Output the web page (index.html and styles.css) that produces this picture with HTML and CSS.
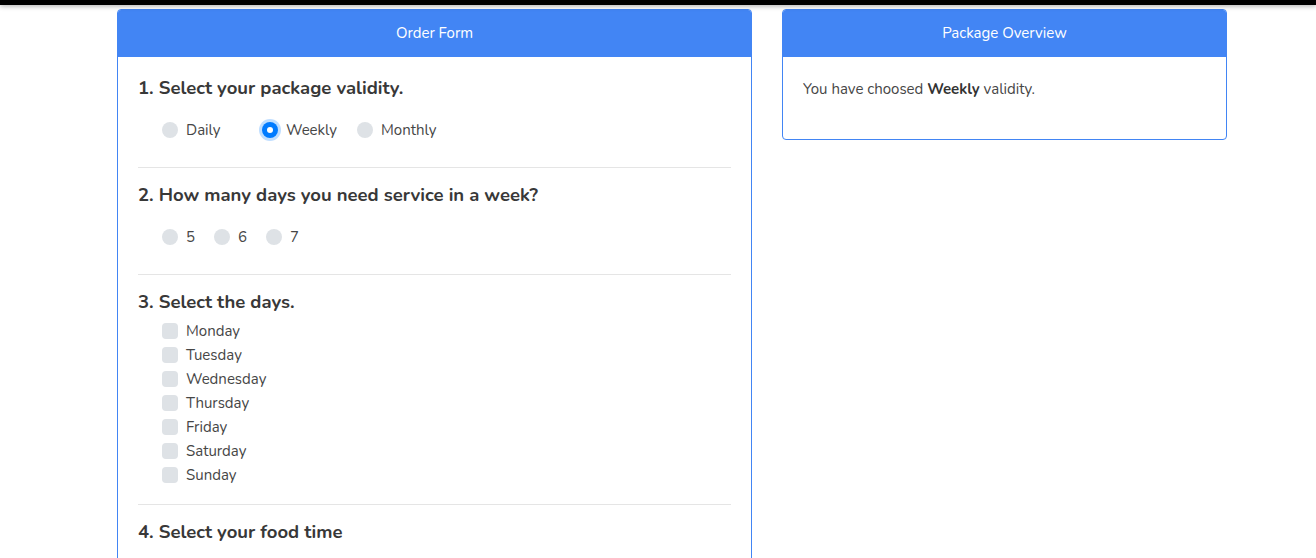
FILE: index.html
```html
<!DOCTYPE html>
<html lang="en">
<head>
<meta charset="utf-8">
<title>Order Form</title>
<link rel="stylesheet" href="styles.css">
</head>
<body>
<div class="topbar"></div>
<div class="container">
  <div class="card card-order">
    <div class="card-header">Order Form</div>
    <div class="card-body">
      <h5 class="q-title">1. Select your package validity.</h5>
      <div class="radio-group">
        <label class="opt w-daily"><span class="radio"></span>Daily</label>
        <label class="opt w-weekly"><span class="radio checked"></span>Weekly</label>
        <label class="opt"><span class="radio"></span>Monthly</label>
      </div>
      <hr class="divider">
      <h5 class="q-title">2. How many days you need service in a week?</h5>
      <div class="radio-group">
        <label class="opt w-num"><span class="radio"></span>5</label>
        <label class="opt w-num"><span class="radio"></span>6</label>
        <label class="opt"><span class="radio"></span>7</label>
      </div>
      <hr class="divider">
      <h5 class="q-title">3. Select the days.</h5>
      <div class="check-list">
        <label class="opt"><span class="check"></span>Monday</label>
        <label class="opt"><span class="check"></span>Tuesday</label>
        <label class="opt"><span class="check"></span>Wednesday</label>
        <label class="opt"><span class="check"></span>Thursday</label>
        <label class="opt"><span class="check"></span>Friday</label>
        <label class="opt"><span class="check"></span>Saturday</label>
        <label class="opt"><span class="check"></span>Sunday</label>
      </div>
      <hr class="divider">
      <h5 class="q-title">4. Select your food time</h5>
    </div>
  </div>
  <div class="card card-overview">
    <div class="card-header">Package Overview</div>
    <div class="card-body">
      <p class="summary">You have choosed <b>Weekly</b> validity.</p>
    </div>
  </div>
</div>
</body>
</html>
```

FILE: styles.css
```css
html, body {
  margin: 0;
  padding: 0;
  background: #fff;
}
body {
  font-family: "Nunito", "Lato", "Open Sans", sans-serif;
  font-size: 16px;
  line-height: 24px;
  color: #464646;
}
.topbar {
  position: fixed;
  top: 0;
  left: 0;
  right: 0;
  height: 5px;
  background: #000;
  box-shadow: 0 1px 5px rgba(0, 0, 0, 0.35);
  z-index: 10;
}
.container {
  display: flex;
  align-items: flex-start;
  gap: 30px;
  padding: 9px 0 0 117px;
}
.card {
  border: 1px solid #4285f4;
  border-radius: 4px;
  background: #fff;
  overflow: hidden;
}
.card-order {
  width: 633px;
  min-height: 700px;
}
.card-overview {
  width: 443px;
}
.card-header {
  background: #4285f4;
  color: #fff;
  text-align: center;
  padding: 11px 20px 12px;
  line-height: 24px;
  font-size: 15px;
}
.card-body {
  padding: 20px;
}
.q-title {
  margin: 0 0 8px;
  font-size: 18.5px;
  line-height: 22.8px;
  font-weight: 700;
  color: #383838;
}
.radio-group {
  display: flex;
  padding: 10px 0 9px 24px;
}
.check-list {
  display: flex;
  flex-direction: column;
  align-items: flex-start;
  margin-top: -2px;
  padding: 0 0 1px 24px;
}
.opt {
  display: flex;
  align-items: center;
  height: 24px;
  font-size: 15px;
}
.w-daily { width: 100px; }
.w-weekly { width: 95px; }
.w-num { width: 52px; }
.radio, .check {
  width: 16px;
  height: 16px;
  background: #dee2e6;
  margin-right: 8px;
  flex: none;
}
.radio { border-radius: 50%; }
.check { border-radius: 4px; }
.radio.checked {
  background: #007bff;
  box-shadow: 0 0 0 3px rgba(0, 123, 255, 0.25);
  display: flex;
  align-items: center;
  justify-content: center;
}
.radio.checked::after {
  content: "";
  width: 6px;
  height: 6px;
  border-radius: 50%;
  background: #fff;
}
.divider {
  margin: 16px 0;
  border: 0;
  border-top: 1px solid #e5e5e5;
}
.summary {
  margin: 0 0 18px;
  font-size: 15px;
}
.summary b {
  color: #333;
}
```
